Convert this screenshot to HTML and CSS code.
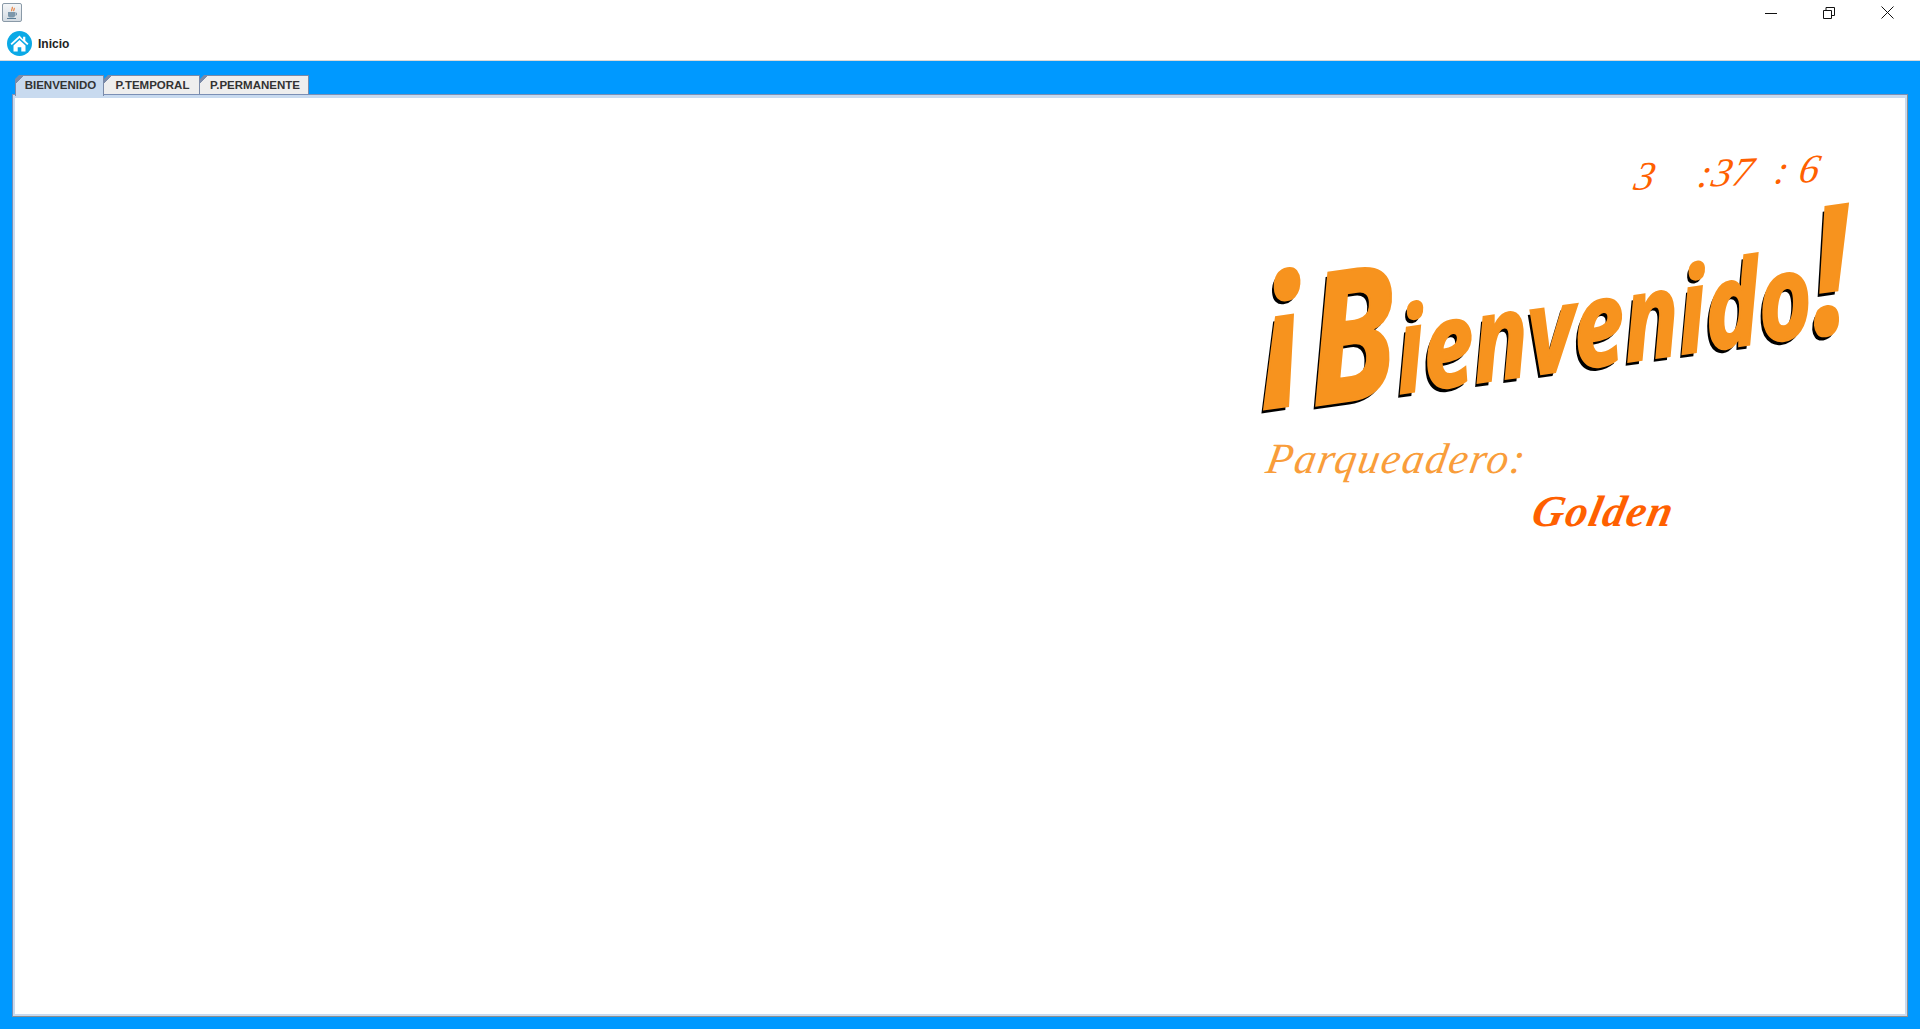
FILE: index.html
```html
<!DOCTYPE html>
<html lang="es">
<head>
<meta charset="utf-8">
<title>Parqueadero</title>
<link rel="stylesheet" href="styles.css">
</head>
<body>
<header class="titlebar">
  <div class="app-icon">
    <svg width="14" height="14" viewBox="0 0 14 14">
      <path d="M7 1c1.500 1.500-1.500 2.500 0 4M9 2c1 1-1 2 0 3" fill="none" stroke="#e8742a" stroke-width="1.100"/>
      <path d="M3 6h7v3.500a2 2 0 0 1-2 2H5a2 2 0 0 1-2-2z" fill="#7d97ab"/>
      <path d="M10 7h1.500v2H10" fill="none" stroke="#7d97ab"/>
      <path d="M2 12.500h9" stroke="#5a7d96" stroke-width="1"/>
    </svg>
  </div>
  <div class="window-controls">
    <div class="win-btn">
      <svg width="12" height="12" viewBox="0 0 12 12"><path d="M0 6.500h12" stroke="#111" stroke-width="1"/></svg>
    </div>
    <div class="win-btn">
      <svg width="12" height="12" viewBox="0 0 12 12"><path d="M.5 3.500h8v8h-8zM3 3.500V.5h8.500v8H8.500" fill="none" stroke="#111" stroke-width="1"/></svg>
    </div>
    <div class="win-btn">
      <svg width="13" height="13" viewBox="0 0 13 13"><path d="M.5.500l12 12M12.500.500l-12 12" stroke="#111" stroke-width="1"/></svg>
    </div>
  </div>
</header>
<nav class="menubar">
  <div class="menu-item">
    <svg class="home" width="25" height="25" viewBox="0 0 25 25">
      <circle cx="12.500" cy="12.500" r="12.500" fill="#0aa9e6"/>
      <path d="M12.500 4.500 3.500 12.800l1.300 1.300 7.700-7 7.700 7 1.300-1.300-3.200-3V5.800h-2.200v2.700z" fill="#fff"/>
      <path d="M6.500 14.500 12.500 9l6 5.500V20.500h-4.200v-4.300h-3.600v4.300H6.500z" fill="#fff"/>
    </svg>
    <span>Inicio</span>
  </div>
</nav>
<main class="desktop">
  <div class="tabs">
    <div class="tab tab-active">BIENVENIDO</div>
    <div class="tab">P.TEMPORAL</div>
    <div class="tab tab-last">P.PERMANENTE</div>
  </div>
  <section class="panel">
    <div class="canvas">
      <div class="clock">3    :37  : 6</div>
      <div class="welcome"><span class="w-open">¡</span><span class="w-cap">B</span>ienvenido<span class="w-close">!</span></div>
      <div class="parking">Parqueadero:</div>
      <div class="golden">Golden</div>
    </div>
  </section>
</main>
</body>
</html>
```
FILE: styles.css
```css
* { box-sizing: border-box; }
html, body { margin: 0; height: 100%; }
body {
  display: flex;
  flex-direction: column;
  height: 1029px;
  overflow: hidden;
  background: #fff;
  font-family: "Liberation Sans", Arial, sans-serif;
}
.titlebar {
  height: 30px;
  display: flex;
  justify-content: space-between;
  align-items: flex-start;
  background: #fff;
}
.app-icon {
  width: 20px;
  height: 19px;
  margin: 3px 0 0 2px;
  display: flex;
  align-items: center;
  justify-content: center;
  border: 1px solid #8a9aa8;
  border-radius: 2px;
  background: linear-gradient(#f4f6f8, #d4dbe2);
}
.window-controls { display: flex; padding-right: 4px; }
.win-btn {
  width: 58px;
  height: 25px;
  display: flex;
  align-items: center;
  justify-content: center;
}
.win-btn svg { display: block; }
.menubar {
  height: 31px;
  padding: 1px 0 0 7px;
  background: #fff;
  border-bottom: 1px solid #d9d9d9;
}
.menu-item {
  display: flex;
  align-items: center;
  gap: 6px;
  height: 25px;
  font-size: 12px;
  font-weight: 700;
  color: #222;
}
.home { display: block; }
.desktop {
  flex: 1;
  display: flex;
  flex-direction: column;
  min-height: 0;
  padding: 14px 12px 12px;
  background: #0099ff;
}
.tabs {
  display: flex;
  height: 19px;
  padding-left: 3px;
}
.tab {
  display: flex;
  align-items: center;
  justify-content: center;
  height: 19px;
  width: 96px;
  padding-left: 2px;
  font-size: 11.500px;
  font-weight: 700;
  color: #333;
  background: linear-gradient(135deg, #7a8aa8 0, #7a8aa8 5px, #eeeeee 5px);
  border: 1px solid #7a8aa8;
  border-bottom: 0;
  border-left: 0;
  clip-path: polygon(4px 0, 100% 0, 100% 100%, 0 100%, 0 4px);
}
.tab-last { width: 109px; }
.tab-active {
  position: relative;
  z-index: 1;
  width: 89px;
  height: 21px;
  padding-bottom: 2px;
  background: linear-gradient(135deg, #7a8aa8 0, #7a8aa8 5px, #c8daef 5px);
  border-left: 1px solid #7a8aa8;
}
.panel {
  flex: 1;
  min-height: 0;
  display: flex;
  border: 1px solid #7b8fb5;
  border-right-color: #8e8e8e;
  border-bottom-color: #8e8e8e;
}
.canvas {
  flex: 1;
  position: relative;
  overflow: hidden;
  background: #fff;
  border: 2px solid #c8daef;
  border-top-width: 3px;
}
.clock, .parking, .golden, .welcome {
  position: absolute;
  white-space: pre;
  line-height: 1;
}
.clock, .parking, .golden {
  font-family: "Liberation Serif", "Times New Roman", serif;
  font-style: italic;
}
.clock {
  left: 1616px;
  top: 59px;
  font-size: 40px;
  letter-spacing: .7px;
  color: #ff6000;
  transform: rotate(-2.500deg) skewX(-14deg);
  transform-origin: left bottom;
}
.welcome {
  left: 1256px;
  top: 162px;
  font-family: "Open Sans", "Liberation Sans", sans-serif;
  font-size: 90px;
  font-weight: 700;
  font-style: italic;
  color: #f7931e;
  -webkit-text-stroke: 2px #f7931e;
  text-shadow: -3px 3px 0 #000;
  transform: rotate(-8deg) skewX(-4deg) scale(1.01, 1.3);
  transform-origin: left bottom;
}
.w-open { font-size: 1.600em; margin-right: 2px; vertical-align: .2em; }
.w-cap { font-size: 1.550em; }
.w-close { font-size: 1.500em; }
.parking {
  left: 1252px;
  top: 339px;
  font-size: 43px;
  letter-spacing: 1.800px;
  color: #f99d3a;
  transform: skewX(-10deg);
}
.golden {
  left: 1518px;
  top: 392px;
  font-size: 44px;
  letter-spacing: 1.500px;
  font-weight: 700;
  color: #ff6000;
  transform: skewX(-12deg);
}
```
